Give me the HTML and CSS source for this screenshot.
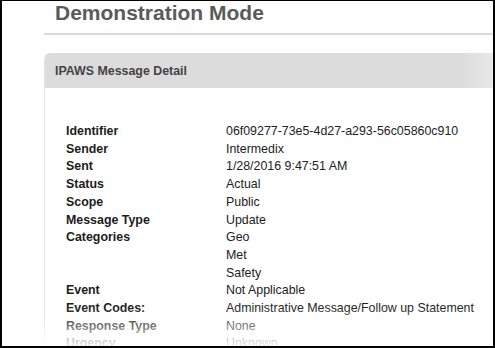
FILE: index.html
```html
<!DOCTYPE html>
<html>
<head>
<meta charset="utf-8">
<link rel="stylesheet" href="styles.css">
</head>
<body>
<div class="frame">
  <h1 class="title">Demonstration Mode</h1>
  <div class="content">
    <div class="rule"></div>
    <div class="panel">
      <div class="panel-head">IPAWS Message Detail</div>
      <div class="panel-body">
        <div class="row"><div class="label">Identifier</div><div class="value">06f09277-73e5-4d27-a293-56c05860c910</div></div>
        <div class="row"><div class="label">Sender</div><div class="value">Intermedix</div></div>
        <div class="row"><div class="label">Sent</div><div class="value">1/28/2016 9:47:51 AM</div></div>
        <div class="row"><div class="label">Status</div><div class="value">Actual</div></div>
        <div class="row"><div class="label">Scope</div><div class="value">Public</div></div>
        <div class="row"><div class="label">Message Type</div><div class="value">Update</div></div>
        <div class="row"><div class="label">Categories</div><div class="value">Geo<br>Met<br>Safety</div></div>
        <div class="row"><div class="label">Event</div><div class="value">Not Applicable</div></div>
        <div class="row"><div class="label">Event Codes:</div><div class="value">Administrative Message/Follow up Statement</div></div>
        <div class="row"><div class="label">Response Type</div><div class="value">None</div></div>
        <div class="row"><div class="label">Urgency</div><div class="value">Unknown</div></div>
      </div>
    </div>
  </div>
  <div class="fade"></div>
</div>
</body>
</html>
```
FILE: styles.css
```css
html, body {
  margin: 0;
  padding: 0;
  background: #fff;
}
.frame {
  position: relative;
  width: 495px;
  height: 348px;
  box-sizing: border-box;
  border: 2px solid #000;
  border-top-width: 1px;
  overflow: hidden;
  font-family: "Liberation Sans", Arial, sans-serif;
  background: #fff;
}
.title {
  margin: 0;
  padding-left: 53px;
  font-size: 21px;
  line-height: 24px;
  font-weight: bold;
  color: #5a5a5a;
}
.content {
  margin-left: 42px;
}
.rule {
  margin-top: 8px;
  height: 2px;
  background: #dadada;
}
.panel {
  margin-top: 18px;
  border-left: 1px solid #e4e4e4;
  border-top-left-radius: 6px;
  overflow: hidden;
}
.panel-head {
  height: 35px;
  display: flex;
  align-items: center;
  padding-left: 10px;
  font-size: 12.4px;
  font-weight: bold;
  color: #444;
  background: linear-gradient(to right, #dcdcdc 93%, #e8e8e8);
}
.panel-body {
  padding: 35px 0 0 21px;
  font-size: 12.4px;
  line-height: 17.7px;
  color: #222;
}
.row {
  display: flex;
}
.label {
  width: 160px;
  flex: none;
  font-weight: bold;
  color: #1c1c1c;
}
.value {
  color: #222;
}
.fade {
  position: absolute;
  left: 0;
  right: 0;
  bottom: 0;
  height: 40px;
  background: linear-gradient(to bottom, rgba(255,255,255,0) 0%, rgba(255,255,255,0.35) 45%, rgba(255,255,255,0.92) 100%);
  pointer-events: none;
}
```
